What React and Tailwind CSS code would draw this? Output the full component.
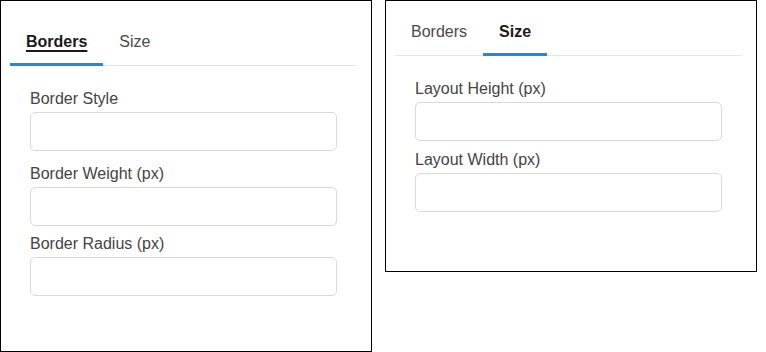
function Field({ label, className = 'mb-2' }) {
    return (
        <div className={className}>
            <label className="block text-[16px] leading-5 text-[#444] mb-[3px]">{label}</label>
            <input type="text" className="block w-full h-[39px] border border-[#dadada] rounded-[5px] bg-white outline-none" />
        </div>
    );
}

function Panel({ active, fields, className, formClass }) {
    const tabs = ['Borders', 'Size'];
    return (
        <div className={`w-[372px] border border-black bg-white pl-[9px] pr-[14px] ${className}`}>
            <div className="flex border-b border-[#e6e6e6]">
                {tabs.map((t) => (
                    <div
                        key={t}
                        className={`px-4 pt-3 pb-[9px] -mb-px text-[16px] leading-6 border-b-[3px] ${
                            t === active
                                ? 'border-[#1e88e5] font-bold text-[#1a1a1a]'
                                : 'border-transparent text-[#4a4a4a]'
                        }`}
                    >
                        <span className={t === active && active === 'Borders' ? 'underline decoration-2 underline-offset-[3px]' : ''}>{t}</span>
                    </div>
                ))}
            </div>
            <div className={`px-5 ${formClass}`}>
                {fields.map((f) => (
                    <Field key={f.label} label={f.label} className={f.gap} />
                ))}
            </div>
        </div>
    );
}

export default function App() {
    return (
        <div className="flex items-start gap-[13px] bg-white w-[766px] h-[352px]" style={{ fontFamily: '"Liberation Sans", Arial, sans-serif' }}>
            <Panel
                active="Borders"
                className="h-[352px] pt-[17px]"
                formClass="pt-[23px]"
                fields={[
                    { label: 'Border Style', gap: 'mb-[13px]' },
                    { label: 'Border Weight (px)', gap: 'mb-2' },
                    { label: 'Border Radius (px)', gap: 'mb-2' },
                ]}
            />
            <Panel
                active="Size"
                className="h-[272px] pt-[7px]"
                formClass="pt-[23px]"
                fields={[
                    { label: 'Layout Height (px)', gap: 'mb-[9px]' },
                    { label: 'Layout Width (px)', gap: 'mb-2' },
                ]}
            />
        </div>
    );
}
